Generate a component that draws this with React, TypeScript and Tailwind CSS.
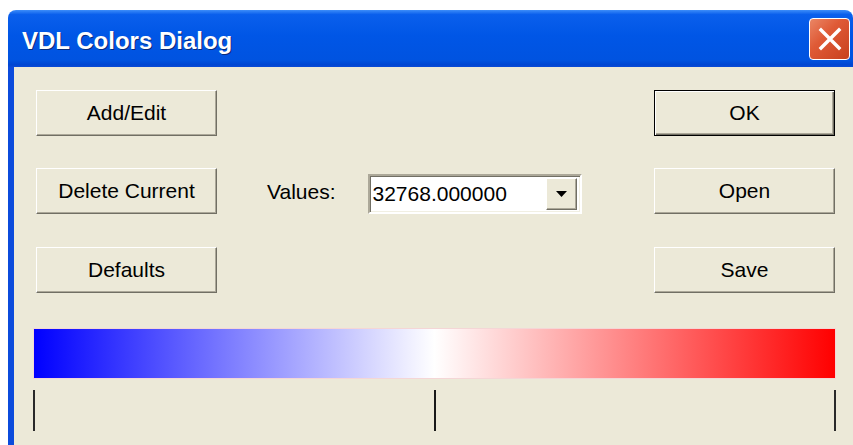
import React from 'react'

const raised =
  'border border-t-white border-l-white border-b-[#716F64] border-r-[#716F64] shadow-[inset_-1px_-1px_0_#ACA899] bg-[#ECE9D8]'

const DlgButton: React.FC<{ label: string; isDefault?: boolean }> = ({ label, isDefault }) => (
  <button
    type="button"
    className={
      isDefault
        ? 'w-[181px] h-[46px] flex items-center justify-center bg-[#ECE9D8] border border-black shadow-[inset_1px_1px_0_#fff,inset_-1px_-1px_0_#716F64,inset_-2px_-2px_0_#ACA899] text-[21px] text-black'
        : `w-[181px] h-[46px] flex items-center justify-center ${raised} text-[21px] text-black`
    }
  >
    {label}
  </button>
)

const ValuesCombo: React.FC = () => (
  <div className="w-[214px] h-[40px] flex bg-white border-2 border-t-[#ACA899] border-l-[#ACA899] border-b-white border-r-white shadow-[inset_1px_1px_0_#716F64,inset_-1px_-1px_0_#F1EFE2]">
    <div className="flex-1 flex items-center pl-[3px] text-[21px] text-black leading-none">32768.000000</div>
    <div className="py-[2px] pr-[3px]">
      <div className={`w-[31px] h-full flex items-center justify-center ${raised}`}>
        <svg width="11" height="6" viewBox="0 0 11 6">
          <polygon points="0,0 11,0 5.5,6" fill="#000" />
        </svg>
      </div>
    </div>
  </div>
)

export default function App() {
  return (
    <div className="w-[853px] h-[445px] overflow-hidden bg-white pt-[10px] pl-[8px] font-['Liberation_Sans',Arial,sans-serif]">
      <div className="w-[845px]">
        {/* title bar */}
        <div className="h-[57px] rounded-t-[8px] flex items-center justify-between pl-[14px] pr-[3px] bg-[linear-gradient(to_bottom,#3D8DF9_0%,#0A5FEC_8%,#0056E6_45%,#0053E0_88%,#0046D2_96%,#0A4AD6_100%)]">
          <span className="text-white font-bold text-[24px] pt-[4px] [text-shadow:1px_1px_0_#0A2A7A]">
            VDL Colors Dialog
          </span>
          <div className="w-[41px] h-[42px] rounded-[4px] border border-white flex items-center justify-center bg-[linear-gradient(135deg,#EA8665_0%,#DF5A36_40%,#C8411E_100%)]">
            <svg width="24" height="24" viewBox="0 0 24 24">
              <path d="M3 3 L21 21 M21 3 L3 21" stroke="#fff" strokeWidth="3.4" strokeLinecap="square" />
            </svg>
          </div>
        </div>

        {/* dialog body */}
        <div className="h-[378px] bg-[#ECE9D8] border-l-[6px] border-[#0B4BDC] pl-[19px] pt-[23px]">
          <div className="w-[803px] flex flex-col">
            <div className="flex justify-between pl-[3px] pr-[1px]">
              <DlgButton label="Add/Edit" />
              <DlgButton label="OK" isDefault />
            </div>
            <div className="flex justify-between items-center pl-[3px] pr-[1px] mt-[32px]">
              <div className="flex items-center">
                <DlgButton label="Delete Current" />
                <span className="ml-[50px] mr-[32px] mt-[2px] text-[21px] text-black">Values:</span>
                <div className="mt-[5px]">
                  <ValuesCombo />
                </div>
              </div>
              <DlgButton label="Open" />
            </div>
            <div className="flex justify-between pl-[3px] pr-[1px] mt-[33px]">
              <DlgButton label="Defaults" />
              <DlgButton label="Save" />
            </div>

            {/* colour scale */}
            <div className="mt-[35px] h-[51px] border border-[#F4D6D6] bg-[linear-gradient(to_right,#0000FF_0%,#FFFFFF_50%,#FF0000_100%)]" />
            <div className="mt-[11px] h-[41px] flex justify-between">
              <div className="w-[2px] bg-[#2A2A2A]" />
              <div className="w-[2px] bg-[#1A1A1A]" />
              <div className="w-[2px] bg-[#2A2A2A]" />
            </div>
          </div>
        </div>
      </div>
    </div>
  )
}
